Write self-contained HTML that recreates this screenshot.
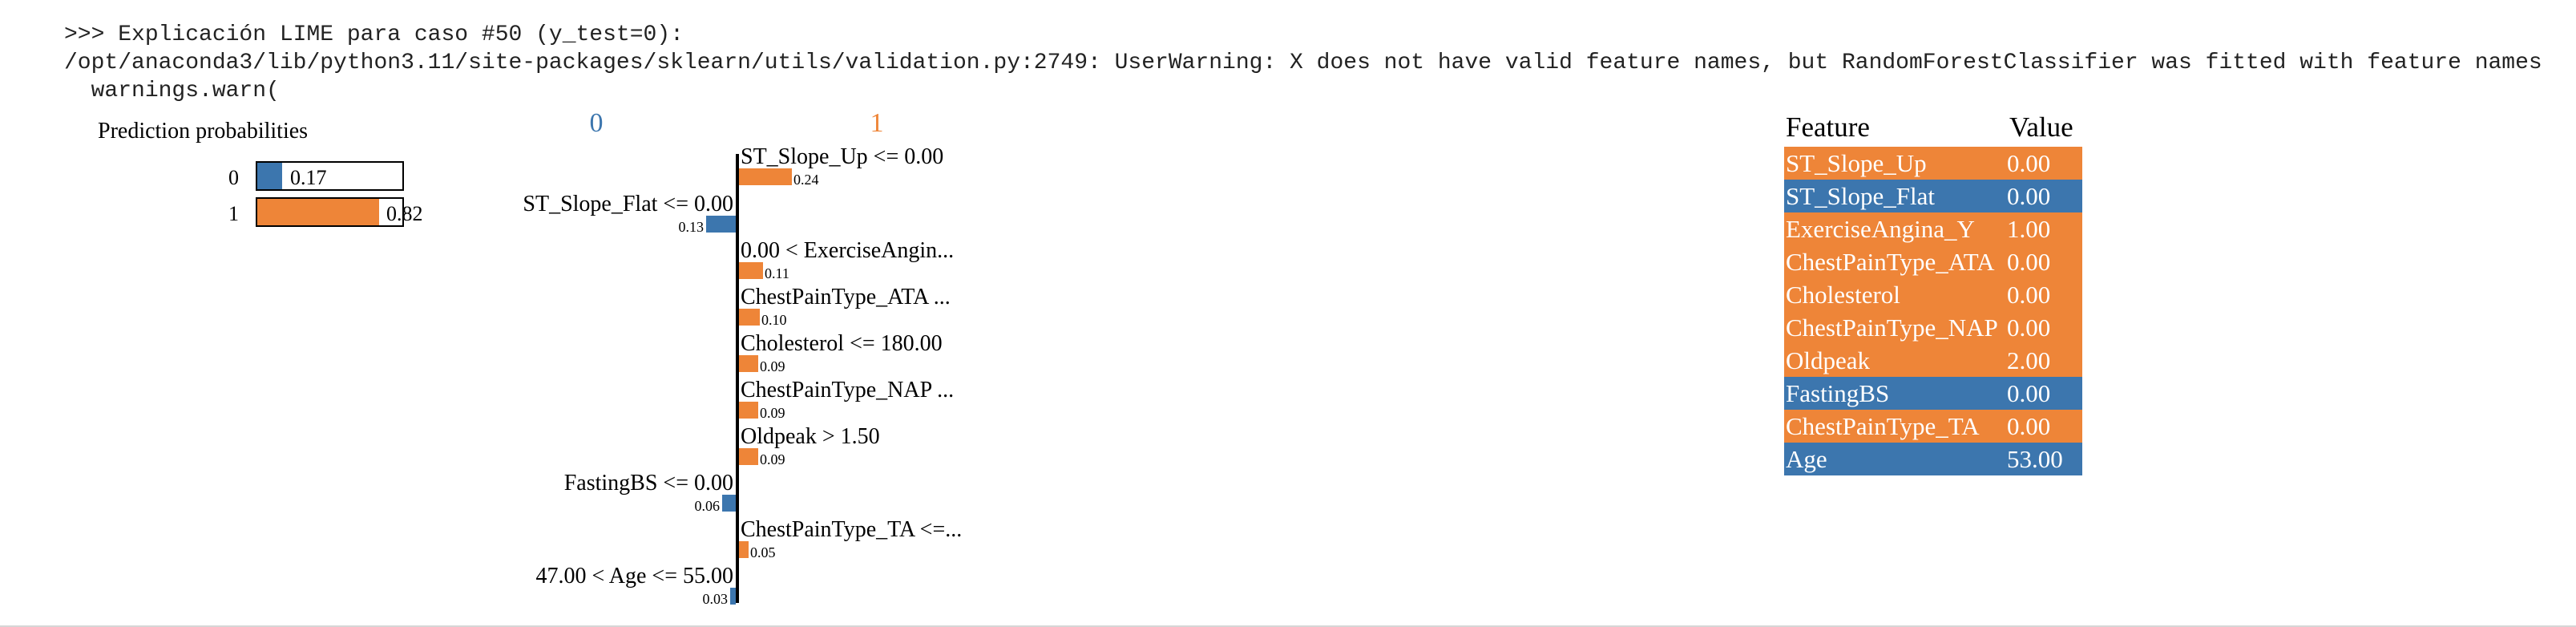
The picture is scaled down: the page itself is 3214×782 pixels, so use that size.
<!DOCTYPE html>
<html><head><meta charset="utf-8"><style>
body{margin:0;width:3214px;height:782px;background:#fff;position:relative;overflow:hidden}
.m{position:absolute;left:80px;font-family:"Liberation Mono",monospace;font-size:28px;color:#222;white-space:pre;line-height:1}
</style></head><body>
<div class="m" style="top:30px">&gt;&gt;&gt; Explicación LIME para caso #50 (y_test=0):</div>
<div class="m" style="top:65px">/opt/anaconda3/lib/python3.11/site-packages/sklearn/utils/validation.py:2749: UserWarning: X does not have valid feature names, but RandomForestClassifier was fitted with feature names</div>
<div class="m" style="top:100px">  warnings.warn(</div>
<svg width="3214" height="782" style="position:absolute;left:0;top:0" font-family="Liberation Serif, serif">
<text x="122" y="172" font-size="28">Prediction probabilities</text>
<text x="285" y="230" font-size="26">0</text>
<rect x="320" y="202" width="183" height="35" fill="#fff" stroke="#000" stroke-width="2"/>
<rect x="321" y="203" width="31" height="33" fill="#3c76ae"/>
<text x="362" y="230" font-size="26">0.17</text>
<text x="285" y="275" font-size="26">1</text>
<rect x="320" y="247" width="183" height="35" fill="#fff" stroke="#000" stroke-width="2"/>
<rect x="321" y="248" width="152" height="33" fill="#ee8538"/>
<text x="482" y="275" font-size="26">0.82</text>

<text x="744" y="164" font-size="34" fill="#3c76ae" text-anchor="middle">0</text>
<text x="1094" y="164" font-size="34" fill="#ee8538" text-anchor="middle">1</text>
<rect x="918" y="192" width="4" height="560" fill="#000"/>
<g font-size="28">
<text x="924" y="204">ST_Slope_Up &lt;= 0.00</text>
<text x="915" y="263" text-anchor="end">ST_Slope_Flat &lt;= 0.00</text>
<text x="924" y="321">0.00 &lt; ExerciseAngin...</text>
<text x="924" y="379">ChestPainType_ATA ...</text>
<text x="924" y="437">Cholesterol &lt;= 180.00</text>
<text x="924" y="495">ChestPainType_NAP ...</text>
<text x="924" y="553">Oldpeak &gt; 1.50</text>
<text x="915" y="611" text-anchor="end">FastingBS &lt;= 0.00</text>
<text x="924" y="669">ChestPainType_TA &lt;=...</text>
<text x="915" y="727" text-anchor="end">47.00 &lt; Age &lt;= 55.00</text>
</g>
<g fill="#ee8538">
<rect x="922" y="210" width="66" height="21"/>
<rect x="922" y="327" width="30" height="21"/>
<rect x="922" y="385" width="26" height="21"/>
<rect x="922" y="443" width="24" height="21"/>
<rect x="922" y="501" width="24" height="21"/>
<rect x="922" y="559" width="24" height="21"/>
<rect x="922" y="675" width="12" height="21"/>
</g>
<g fill="#3c76ae">
<rect x="881" y="269" width="37" height="21"/>
<rect x="901" y="617" width="17" height="21"/>
<rect x="911" y="733" width="7" height="21"/>
</g>
<g font-size="18">
<text x="990" y="230">0.24</text>
<text x="878" y="289" text-anchor="end">0.13</text>
<text x="954" y="347">0.11</text>
<text x="950" y="405">0.10</text>
<text x="948" y="463">0.09</text>
<text x="948" y="521">0.09</text>
<text x="948" y="579">0.09</text>
<text x="898" y="637" text-anchor="end">0.06</text>
<text x="936" y="695">0.05</text>
<text x="908" y="753" text-anchor="end">0.03</text>
</g>

<text x="2228" y="170" font-size="35">Feature</text>
<text x="2507" y="170" font-size="35">Value</text>
<rect x="2226" y="183" width="372" height="41" fill="#ee8538"/>
<rect x="2226" y="224" width="372" height="41" fill="#3c76ae"/>
<rect x="2226" y="265" width="372" height="205" fill="#ee8538"/>
<rect x="2226" y="470" width="372" height="41" fill="#3c76ae"/>
<rect x="2226" y="511" width="372" height="41" fill="#ee8538"/>
<rect x="2226" y="552" width="372" height="41" fill="#3c76ae"/>
<g font-size="31" fill="#fff">
<text x="2228" y="214">ST_Slope_Up</text><text x="2504" y="214">0.00</text>
<text x="2228" y="255">ST_Slope_Flat</text><text x="2504" y="255">0.00</text>
<text x="2228" y="296">ExerciseAngina_Y</text><text x="2504" y="296">1.00</text>
<text x="2228" y="337">ChestPainType_ATA</text><text x="2504" y="337">0.00</text>
<text x="2228" y="378">Cholesterol</text><text x="2504" y="378">0.00</text>
<text x="2228" y="419">ChestPainType_NAP</text><text x="2504" y="419">0.00</text>
<text x="2228" y="460">Oldpeak</text><text x="2504" y="460">2.00</text>
<text x="2228" y="501">FastingBS</text><text x="2504" y="501">0.00</text>
<text x="2228" y="542">ChestPainType_TA</text><text x="2504" y="542">0.00</text>
<text x="2228" y="583">Age</text><text x="2504" y="583">53.00</text>
</g>
<rect x="0" y="780" width="3214" height="2" fill="#d6d6d6"/>
</svg>
</body></html>
